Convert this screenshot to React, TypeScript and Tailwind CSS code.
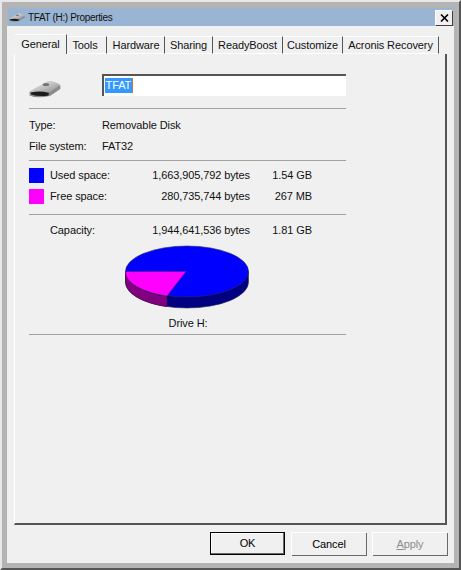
const tabs = [
  { label: "General", width: "w-[52px]", active: true },
  { label: "Tools", width: "w-[40px] pr-[3px]" },
  { label: "Hardware", width: "w-[58px] pl-[1px]" },
  { label: "Sharing", width: "w-[48px]" },
  { label: "ReadyBoost", width: "w-[70px]" },
  { label: "Customize", width: "w-[60px]" },
  { label: "Acronis Recovery", width: "w-[96px]" },
];

const spaceRows = [
  { label: "Used space:", swatch: "bg-[#0000ff]", bytes: "1,663,905,792 bytes", size: "1.54 GB" },
  { label: "Free space:", swatch: "bg-[#ff00ff]", bytes: "280,735,744 bytes", size: "267 MB" },
];

function DriveIcon({ className, id }: { className: string; id: string }) {
  return (
    <svg viewBox="0 0 32 18" className={className}>
      <defs>
        <linearGradient id={id} x1="0" y1="0" x2="1" y2="1">
          <stop offset="0" stopColor="#f6f6f6" />
          <stop offset="1" stopColor="#8a8a8a" />
        </linearGradient>
      </defs>
      <path d="M0.5 12 L19 1.5 Q25 1 31.5 5.5 L31.5 9 L21 16 Q8 19 0.5 15.5 Z" fill="#8c8c8c" />
      <path d="M0.5 11.5 L19 1 Q25 0.5 31.5 5 L21 12 Q8 14 0.5 11.5 Z" fill={`url(#${id})`} />
      <path d="M2 12.5 Q11 10.5 20 13 L19.5 15.5 Q10 17 2 14.5 Z" fill="#1c1c1c" />
      <ellipse cx="17" cy="4.5" rx="3.2" ry="1.6" fill="#727272" />
    </svg>
  );
}

function PieChart() {
  return (
    <svg viewBox="0 0 124 64" className="h-[64px] w-[124px]">
      <path
        d="M0.5 26.5 L0.5 37 A61.5 26 0 0 0 123.5 37 L123.5 26.5 Z"
        fill="#000080"
        stroke="#2a2a55"
        strokeWidth="0.6"
      />
      <path
        d="M0.5 26.5 L0.5 37 A61.5 26 0 0 0 42 61.7 L42 51.5 A61.5 26 0 0 1 0.5 26.5 Z"
        fill="#800080"
        stroke="#3a103a"
        strokeWidth="0.6"
      />
      <ellipse cx="62" cy="26.5" rx="61.5" ry="25.5" fill="#0000ff" stroke="#2a2a55" strokeWidth="0.6" />
      <path d="M61 26.5 L0.5 26.5 A61.5 25.5 0 0 0 42 51 Z" fill="#ff00ff" stroke="#5a1a5a" strokeWidth="0.5" />
    </svg>
  );
}

function Divider() {
  return <div className="h-px w-full bg-[#a0a0a0]" />;
}

function DialogButton({ label, isDefault, disabled }: { label: string; isDefault?: boolean; disabled?: boolean }) {
  const border = isDefault
    ? "border border-black shadow-[inset_-1px_-1px_0_#696969,inset_1px_1px_0_#fff]"
    : "border-t border-l border-white shadow-[1px_1px_0_#696969]";
  return (
    <div
      className={`flex h-[23px] w-[75px] items-center justify-center bg-[#f0f0f0] ${border} ${
        disabled ? "text-[#8d8d8d]" : "text-black"
      }`}
    >
      {label === "Apply" ? (
        <span>
          <span className="underline">A</span>pply
        </span>
      ) : (
        label
      )}
    </div>
  );
}

export default function App() {
  return (
    <div className="h-[570px] w-[461px] overflow-hidden border-2 border-t-[#e8e8e8] border-r-[#555555] border-b-[#555555] border-l-[#e8e8e8] bg-[#b4b4b4] px-[5px] pt-[6px] font-['Liberation_Sans',sans-serif] text-[11px] tracking-[-0.1px] text-[#111]">
      <div className="mx-[1px] flex h-[18px] items-center bg-[#9ab5d3] pl-[1px] pr-[1px]">
        <DriveIcon id="titleDrive" className="h-[9px] w-[16px]" />
        <span className="ml-[3px] text-[10px] tracking-[-0.35px] text-[#111]">TFAT (H:) Properties</span>
        <div className="ml-auto flex h-[15px] w-[17px] items-center justify-center border-t border-l border-white bg-[#f0f0f0] shadow-[1px_1px_0_#404040]">
          <svg viewBox="0 0 9 8" className="h-[8px] w-[9px]">
            <path d="M1 0.5 L8 7.5 M8 0.5 L1 7.5" stroke="#000" strokeWidth="1.6" />
          </svg>
        </div>
      </div>

      <div className="h-[537px] bg-[#f0f0f0] pl-[7px] pt-[8px]">
        <div className="ml-[1px] flex h-[20px] items-end">
          {tabs.map((tab) => (
            <div
              key={tab.label}
              className={`flex items-center justify-center whitespace-nowrap border-t border-r border-t-white border-r-[#555555] ${tab.width} ${
                tab.active ? "h-[20px]" : "h-[18px] border-b border-b-white"
              }`}
            >
              {tab.label}
            </div>
          ))}
        </div>

        <div className="h-[471px] w-[433px] border-r-2 border-b-2 border-l border-r-[#555555] border-b-[#555555] border-l-white pl-[14px] pt-[20px]">
          <div className="w-[317px]">
            <div className="flex h-[34px] items-start">
              <DriveIcon id="bigDrive" className="mt-[6px] h-[18px] w-[32px]" />
              <div className="ml-[41px] h-[22px] w-[245px] border-t-2 border-l-2 border-t-[#555555] border-l-[#555555] bg-white pl-[1px] pt-[1px]">
                <span className="inline-block h-[15px] w-[28px] border-r border-r-[#c47a30] bg-[#3399ff] text-center leading-[15px] text-white">
                  TFAT
                </span>
              </div>
            </div>
            <Divider />

            <div className="flex h-[24px] items-end">
              <span className="w-[73px]">Type:</span>
              <span>Removable Disk</span>
            </div>
            <div className="flex h-[21px] items-end">
              <span className="w-[73px]">File system:</span>
              <span>FAT32</span>
            </div>
            <div className="h-[6px]" />
            <Divider />

            <div className="flex flex-col gap-[6px] pt-[7px]">
              {spaceRows.map((row) => (
                <div key={row.label} className="flex h-[15px] items-center">
                  <span className={`h-[15px] w-[15px] ${row.swatch}`} />
                  <span className="ml-[6px] w-[80px]">{row.label}</span>
                  <span className="w-[120px] text-right">{row.bytes}</span>
                  <span className="w-[62px] text-right">{row.size}</span>
                </div>
              ))}
            </div>
            <div className="h-[10px]" />
            <Divider />

            <div className="flex h-[30px] items-center pt-[1px]">
              <span className="ml-[21px] w-[80px]">Capacity:</span>
              <span className="w-[120px] text-right">1,944,641,536 bytes</span>
              <span className="w-[62px] text-right">1.81 GB</span>
            </div>

            <div className="flex justify-center pr-[2px]">
              <PieChart />
            </div>
            <div className="flex h-[25px] items-center justify-center pl-[1px] pt-[4px]">Drive H:</div>
            <Divider />
          </div>
        </div>

        <div className="flex justify-end gap-[6px] pr-[7px] pt-[7px]">
          <DialogButton label="OK" isDefault />
          <DialogButton label="Cancel" />
          <DialogButton label="Apply" disabled />
        </div>
      </div>
    </div>
  );
}
